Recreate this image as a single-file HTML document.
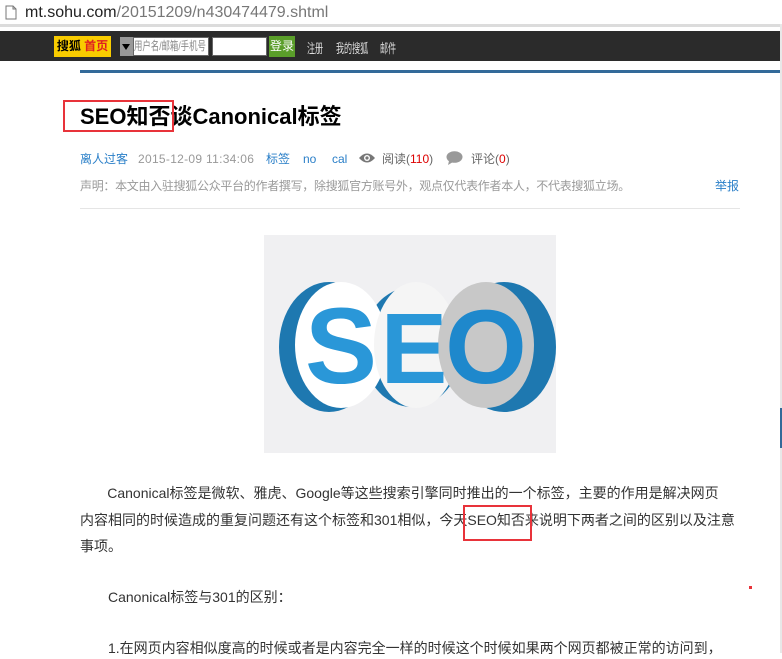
<!DOCTYPE html>
<html><head><meta charset="utf-8"><style>
*{margin:0;padding:0;box-sizing:border-box}
body{width:782px;height:653px;overflow:hidden;background:#fff;font-family:"Liberation Sans","Noto Sans CJK SC",sans-serif;position:relative}
.a{position:absolute;white-space:nowrap}
.m{font-size:12px;line-height:16px;top:151px}
.n{font-size:13px;color:#ddd;top:38px;transform:scaleX(0.62);transform-origin:left top}
</style></head><body>
<div class="a" style="left:0;top:0;width:782px;height:27px;background:#fff;border-bottom:3px solid #dcdcdc"></div>
<svg class="a" style="left:5px;top:5px" width="12" height="15" viewBox="0 0 12 15"><path d="M1 1h7l3 3v10H1z M8 1v3h3" fill="#fff" stroke="#777"/></svg>
<div class="a" style="left:25px;top:2px;font-size:16px;color:#777;line-height:22px"><span style="color:#222">mt.sohu.com</span>/20151209/n430474479.shtml</div>
<div class="a" style="left:0;top:31px;width:782px;height:30px;background:#2b2b2b"></div>
<div class="a" style="left:54px;top:36px;width:57px;height:21px;background:#f9cc00;font-size:12px;font-weight:bold;line-height:21px;text-align:center">搜狐 <span style="color:#e02020">首页</span></div>
<div class="a" style="left:120px;top:37px;width:13px;height:19px;background:#999"></div>
<div class="a" style="left:122px;top:44px;width:0;height:0;border:4px solid transparent;border-top:6px solid #000"></div>
<div class="a" style="left:133px;top:37px;width:76px;height:19px;background:#fff;border:1px solid #666;overflow:hidden"><div style="font-size:12px;color:#888;line-height:17px;transform:scaleX(0.7);transform-origin:left top;white-space:nowrap">用户名/邮箱/手机号</div></div>
<div class="a" style="left:212px;top:37px;width:55px;height:19px;background:#fff;border:1px solid #666"></div>
<div class="a" style="left:269px;top:36px;width:26px;height:21px;background:#5a9e2a;color:#fff;font-size:12px;line-height:21px;text-align:center">登录</div>
<div class="a n" style="left:307px">注册</div>
<div class="a n" style="left:336px">我的搜狐</div>
<div class="a n" style="left:380px">邮件</div>
<div class="a" style="left:80px;top:70px;width:702px;height:3px;background:#336a99"></div>
<div class="a" style="left:80px;top:102px;font-size:22px;font-weight:bold;color:#000;line-height:30px">SEO知否谈Canonical标签</div>
<div class="a" style="left:63px;top:100px;width:111px;height:32px;border:2px solid #e8333a"></div>
<div class="a m" style="left:80px;color:#2a7fc8">离人过客</div>
<div class="a m" style="left:138px;color:#999;letter-spacing:0.3px">2015-12-09 11:34:06</div>
<div class="a m" style="left:266px;color:#2a7fc8">标签</div>
<div class="a m" style="left:303px;color:#2a7fc8">no</div>
<div class="a m" style="left:332px;color:#2a7fc8">cal</div>
<svg class="a" style="left:358px;top:152px" width="18" height="12" viewBox="0 0 18 12"><path d="M1 6Q9-3 17 6Q9 15 1 6z" fill="#777"/><circle cx="9" cy="6" r="3" fill="#fff"/><circle cx="9" cy="6" r="1.6" fill="#777"/></svg>
<div class="a m" style="left:382px;color:#666">阅读(<span style="color:#d00">110</span>)</div>
<svg class="a" style="left:446px;top:151px" width="17" height="14" viewBox="0 0 17 14"><ellipse cx="8.5" cy="6" rx="8" ry="5.8" fill="#999"/><path d="M3 10l-1 4 5-3z" fill="#999"/></svg>
<div class="a m" style="left:471px;color:#666">评论(<span style="color:#d00">0</span>)</div>
<div class="a" style="left:80px;top:178px;font-size:12px;color:#999;line-height:16px;letter-spacing:-0.3px">声明：本文由入驻搜狐公众平台的作者撰写，除搜狐官方账号外，观点仅代表作者本人，不代表搜狐立场。</div>
<div class="a" style="left:715px;top:178px;font-size:12px;color:#2a7fc8;line-height:16px">举报</div>
<div class="a" style="left:80px;top:208px;width:660px;height:1px;background:#e5e5e5"></div>
<svg class="a" style="left:264px;top:235px" width="292" height="218" viewBox="0 0 292 218">
<rect width="292" height="218" fill="#f0f0f2"/>
<ellipse cx="65" cy="112" rx="50" ry="65" fill="#1e78b0"/>
<ellipse cx="148" cy="112" rx="50" ry="60" fill="#1e78b0"/>
<ellipse cx="240" cy="112" rx="52" ry="65" fill="#1e78b0"/>
<ellipse cx="77" cy="110" rx="46" ry="63" fill="#fff"/>
<ellipse cx="152" cy="110" rx="42" ry="63" fill="#f5f5f5"/>
<ellipse cx="222" cy="110" rx="48" ry="63" fill="#c8c8c8"/>
<text x="77" y="148" font-family="Liberation Sans" font-weight="bold" font-size="108" fill="#2a97d8" text-anchor="middle">S</text>
<text x="150" y="148" font-family="Liberation Sans" font-weight="bold" font-size="100" fill="#2a97d8" text-anchor="middle">E</text>
<text x="222" y="148" font-family="Liberation Sans" font-weight="bold" font-size="105" fill="#1e88cc" text-anchor="middle">O</text>
</svg>
<div class="a" style="left:80px;top:480px;font-size:14px;color:#333;line-height:26.5px">&nbsp;&nbsp;&nbsp;&nbsp;&nbsp;&nbsp;&nbsp;Canonical标签是微软、雅虎、Google等这些搜索引擎同时推出的一个标签，主要的作用是解决网页<br>内容相同的时候造成的重复问题还有这个标签和301相似，今天SEO知否来说明下两者之间的区别以及注意<br>事项。</div>
<div class="a" style="left:463px;top:505px;width:69px;height:36px;border:2px solid #e8333a"></div>
<div class="a" style="left:108px;top:586px;font-size:14px;color:#333;line-height:22px">Canonical标签与301的区别：</div>
<div class="a" style="left:108px;top:637px;font-size:14px;color:#333;line-height:22px">1.在网页内容相似度高的时候或者是内容完全一样的时候这个时候如果两个网页都被正常的访问到，</div>
<div class="a" style="left:749px;top:586px;width:3px;height:3px;background:#e8333a"></div>
<div class="a" style="left:780px;top:24px;width:2px;height:629px;background:#e8e8e8"></div>
<div class="a" style="left:780px;top:408px;width:2px;height:40px;background:#336a99"></div>
</body></html>
